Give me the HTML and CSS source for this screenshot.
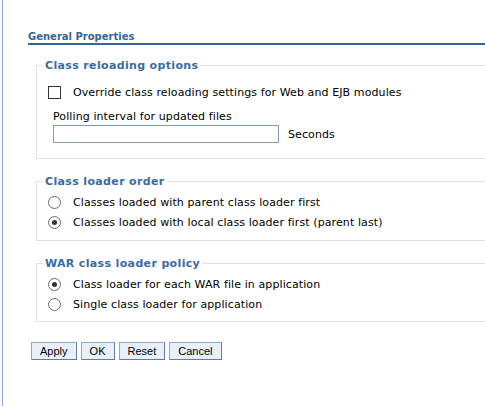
FILE: index.html
```html
<!DOCTYPE html>
<html>
<head>
<meta charset="utf-8">
<link rel="stylesheet" href="styles.css">
</head>
<body>
<div class="page">
  <div class="content">
    <h2 class="section-title">General Properties</h2>

    <fieldset class="group group-reload">
      <legend class="group-legend">Class reloading options</legend>
      <label class="row">
        <span class="checkbox"></span>
        <span class="row-text">Override class reloading settings for Web and EJB modules</span>
      </label>
      <div class="field">
        <div class="field-label">Polling interval for updated files</div>
        <div class="field-input-row">
          <span class="text-input"></span>
          <span class="unit">Seconds</span>
        </div>
      </div>
    </fieldset>

    <fieldset class="group group-order">
      <legend class="group-legend">Class loader order</legend>
      <label class="row">
        <span class="radio"></span>
        <span class="row-text">Classes loaded with parent class loader first</span>
      </label>
      <label class="row">
        <span class="radio checked"></span>
        <span class="row-text">Classes loaded with local class loader first (parent last)</span>
      </label>
    </fieldset>

    <fieldset class="group group-policy">
      <legend class="group-legend">WAR class loader policy</legend>
      <label class="row">
        <span class="radio checked"></span>
        <span class="row-text">Class loader for each WAR file in application</span>
      </label>
      <label class="row">
        <span class="radio"></span>
        <span class="row-text">Single class loader for application</span>
      </label>
    </fieldset>

    <div class="buttons">
      <button class="btn">Apply</button>
      <button class="btn">OK</button>
      <button class="btn">Reset</button>
      <button class="btn">Cancel</button>
    </div>
  </div>
</div>
</body>
</html>
```

FILE: styles.css
```css
html, body {
  margin: 0;
  padding: 0;
  background: #ffffff;
  overflow: hidden;
}

body {
  font-family: "DejaVu Sans", Verdana, sans-serif;
  font-size: 11px;
  letter-spacing: 0.1px;
  color: #000000;
  width: 485px;
  height: 406px;
}

.page {
  margin-left: 2px;
  border-left: 1px solid #8eaedb;
  height: 406px;
  box-sizing: border-box;
  padding-top: 31px;
}

.content {
  padding-left: 25px;
  margin-right: -60px;
}

.section-title {
  margin: 0;
  font-size: 10px;
  letter-spacing: 0;
  line-height: 12px;
  font-weight: bold;
  color: #336699;
  padding-bottom: 0;
  border-bottom: 2px solid #336699;
}

.group {
  margin: 11px 0 0 8px;
  padding: 0 0 0 6px;
  border: 1px solid #e0e0e0;
  min-width: 0;
}

.group + .group {
  margin-top: 13px;
}

.group-legend {
  padding: 2px 2px 0;
  font-size: 11px;
  letter-spacing: 0.35px;
  line-height: 16px;
  font-weight: bold;
  color: #3a6ca3;
}

.group-reload {
  padding-top: 8px;
  padding-bottom: 15px;
}

.group-order {
  padding-top: 2px;
  padding-bottom: 8px;
}

.group-policy {
  padding-top: 3px;
  padding-bottom: 7px;
}

.row {
  display: flex;
  align-items: center;
  height: 20px;
  padding-left: 5px;
  gap: 12px;
}

.group-policy .row {
  height: 19.5px;
}

.checkbox {
  width: 13px;
  height: 13px;
  box-sizing: border-box;
  border: 1px solid #333333;
  background: #ffffff;
  flex: none;
}

.radio {
  width: 13px;
  height: 13px;
  box-sizing: border-box;
  border: 1px solid #6a6a6a;
  border-radius: 50%;
  background: #ffffff;
  flex: none;
  display: flex;
  align-items: center;
  justify-content: center;
}

.radio.checked::after {
  content: "";
  width: 5px;
  height: 5px;
  border-radius: 50%;
  background: #333333;
}

.field {
  padding-left: 10px;
  margin-top: 8px;
}

.field-label {
  line-height: 14px;
  height: 14px;
}

.field-input-row {
  display: flex;
  align-items: center;
  gap: 9px;
  margin-top: 1px;
}

.text-input {
  width: 226px;
  height: 18px;
  box-sizing: border-box;
  border: 1px solid #7f9db9;
  background: #ffffff;
}

.buttons {
  display: flex;
  gap: 4px;
  margin: 20px 0 0 3px;
}

.btn {
  font-family: "Liberation Sans", Arial, sans-serif;
  font-size: 11px;
  letter-spacing: 0;
  height: 18px;
  min-width: 34px;
  padding: 0 8px;
  margin: 0;
  background: #e8f0fb;
  color: #000000;
  border: 1px solid #5b7fa9;
  border-top-color: #8aa6c8;
  border-left-color: #8aa6c8;
  border-radius: 0;
  line-height: 16px;
}
```
